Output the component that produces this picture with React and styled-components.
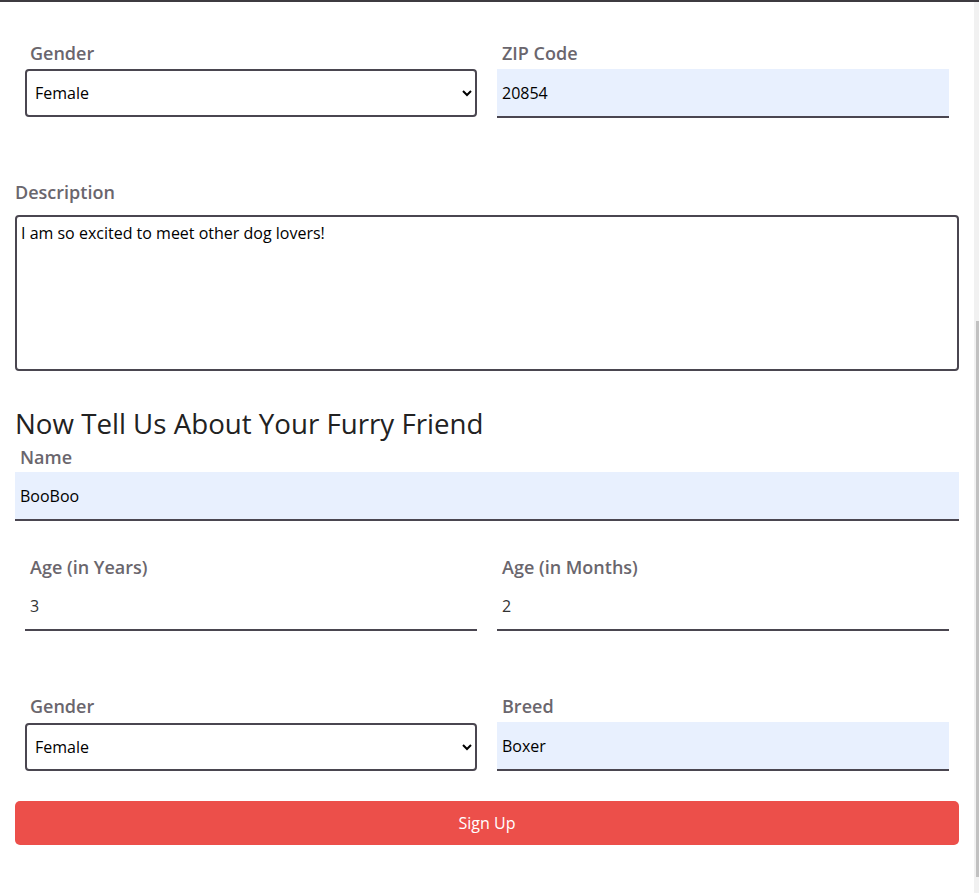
import React, { useLayoutEffect, useRef, useState } from "react";
import styled, { createGlobalStyle } from "styled-components";

const GlobalStyle = createGlobalStyle`
  html, body {
    margin: 0;
    height: 100%;
    background: #fff;
  }
  body {
    font-family: "Open Sans", "Lato", sans-serif;
  }
`;

const Modal = styled.div`
  height: 893px;
  box-sizing: border-box;
  border-top: 2px solid #3d3b40;
  display: flex;
  background: #fff;
`;

const Scroller = styled.div`
  flex: 1;
  min-width: 0;
  overflow-y: scroll;
  scrollbar-width: none;
  &::-webkit-scrollbar {
    display: none;
  }
`;

const ScrollTrack = styled.div`
  width: 5px;
  flex-shrink: 0;
  display: flex;
  flex-direction: column;
  padding-bottom: 16px;
  box-sizing: border-box;
  background: #f1f1f1;
`;

const ScrollThumb = styled.div`
  width: 3px;
  margin-left: 2px;
  background: #c1c1c1;
`;

const Form = styled.form`
  display: flex;
  flex-direction: column;
  padding: 15px 15px 48px;
`;

const Heading = styled.h2`
  margin: ${({ $top }) => $top ?? 35}px 0 6px;
  font-size: 27.7px;
  line-height: 34px;
  font-weight: 400;
  color: #222;
`;

const Row = styled.div`
  display: grid;
  grid-template-columns: 1fr 1fr;
  margin: ${({ $top }) => $top ?? 34}px 0 30px;
`;

const Field = styled.div`
  display: flex;
  flex-direction: column;
  padding: 0 ${({ $full }) => ($full ? 0 : 10)}px;
  margin-top: ${({ $top }) => $top ?? 0}px;
`;

const Label = styled.label`
  display: block;
  padding-left: ${({ $flush }) => ($flush ? 0 : 5)}px;
  margin-bottom: ${({ $gap }) => $gap ?? 5}px;
  font-size: 18px;
  line-height: 22px;
  font-weight: 600;
  color: #6a666d;
`;

const TextInput = styled.input`
  height: ${({ $filled }) => ($filled ? 49 : 48)}px;
  box-sizing: border-box;
  border: none;
  border-bottom: 2px solid #4a4650;
  background: ${({ $filled }) => ($filled ? "#e8f0fe" : "transparent")};
  padding: 0 5px;
  font-family: inherit;
  font-size: 16px;
  color: ${({ $filled }) => ($filled ? "#000" : "#333")};
  outline: none;
`;

const Select = styled.select`
  height: 48px;
  box-sizing: border-box;
  border: 2px solid #4a4650;
  border-radius: 4px;
  background: #fff;
  padding: 0 4px;
  font-family: inherit;
  font-size: 16px;
  color: #000;
  outline: none;
`;

const TextArea = styled.textarea`
  height: 156px;
  box-sizing: border-box;
  border: 2px solid #4a4650;
  border-radius: 4px;
  padding: 6px 4px;
  resize: none;
  font-family: inherit;
  font-size: 16px;
  line-height: 20px;
  color: #000;
  outline: none;
`;

const SubmitButton = styled.button`
  height: 44px;
  border: none;
  border-radius: 5px;
  background: #ec4f4a;
  color: #fff;
  font-family: inherit;
  font-size: 16px;
  font-weight: 500;
  cursor: pointer;
`;

const GenderSelect = () => (
  <Select defaultValue="female">
    <option value="male">Male</option>
    <option value="female">Female</option>
  </Select>
);

export default function App() {
  const scrollRef = useRef(null);
  const trackRef = useRef(null);
  const [thumb, setThumb] = useState({ top: 0, height: 0 });

  const updateThumb = () => {
    const el = scrollRef.current;
    const track = trackRef.current;
    if (!el || !track) return;
    const trackH = track.clientHeight - 16;
    setThumb({
      top: (el.scrollTop / el.scrollHeight) * trackH,
      height: (el.clientHeight / el.scrollHeight) * trackH,
    });
  };

  useLayoutEffect(() => {
    const el = scrollRef.current;
    if (el) el.scrollTop = el.scrollHeight;
    updateThumb();
  }, []);

  return (
    <>
      <GlobalStyle />
      <Modal>
        <Scroller ref={scrollRef} onScroll={updateThumb}>
          <Form onSubmit={(e) => e.preventDefault()}>
            <Heading $top={0}>First Tell Us About Yourself</Heading>
            <Field $full>
              <Label $gap={4}>Name</Label>
              <TextInput $filled defaultValue="Jane Doe" />
            </Field>
            <Field $full $top={34}>
              <Label $gap={4}>Email</Label>
              <TextInput $filled defaultValue="jane@example.com" />
            </Field>
            <Row>
              <Field>
                <Label>Password</Label>
                <TextInput type="password" defaultValue="password" />
              </Field>
              <Field>
                <Label>Confirm Password</Label>
                <TextInput type="password" defaultValue="password" />
              </Field>
            </Row>
            <Row>
              <Field>
                <Label>Phone</Label>
                <TextInput defaultValue="" />
              </Field>
              <Field>
                <Label>City</Label>
                <TextInput defaultValue="" />
              </Field>
            </Row>
            <Row>
              <Field>
                <Label>Gender</Label>
                <GenderSelect />
              </Field>
              <Field>
                <Label>ZIP Code</Label>
                <TextInput $filled defaultValue="20854" />
              </Field>
            </Row>
            <Field $full $top={33}>
              <Label $flush $gap={12}>Description</Label>
              <TextArea defaultValue="I am so excited to meet other dog lovers!" />
            </Field>

            <Heading>Now Tell Us About Your Furry Friend</Heading>
            <Field $full>
              <Label $gap={4}>Name</Label>
              <TextInput $filled defaultValue="BooBoo" />
            </Field>
            <Row $top={35}>
              <Field>
                <Label>Age (in Years)</Label>
                <TextInput defaultValue="3" />
              </Field>
              <Field>
                <Label>Age (in Months)</Label>
                <TextInput defaultValue="2" />
              </Field>
            </Row>
            <Row>
              <Field>
                <Label $gap={6}>Gender</Label>
                <GenderSelect />
              </Field>
              <Field>
                <Label $gap={5}>Breed</Label>
                <TextInput $filled defaultValue="Boxer" />
              </Field>
            </Row>
            <SubmitButton type="submit">Sign Up</SubmitButton>
          </Form>
        </Scroller>
        <ScrollTrack ref={trackRef}>
          <ScrollThumb style={{ marginTop: thumb.top, height: thumb.height }} />
        </ScrollTrack>
      </Modal>
    </>
  );
}
